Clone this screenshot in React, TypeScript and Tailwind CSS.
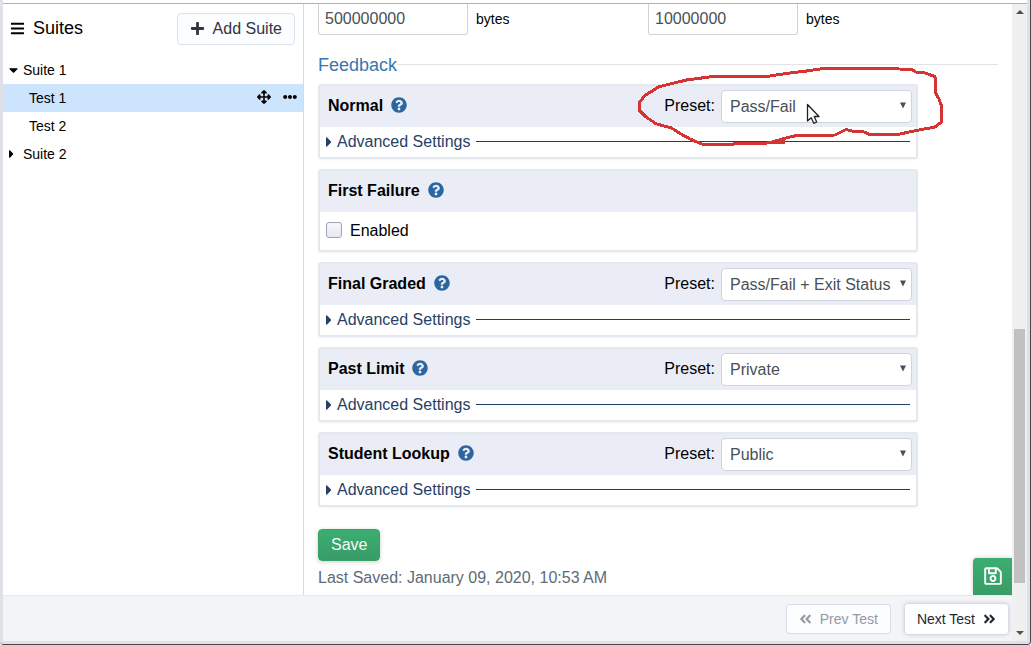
import React, { useState } from "react";
import {
  FaAngleDoubleLeft,
  FaAngleDoubleRight,
  FaArrowsAlt,
  FaBars,
  FaCaretDown,
  FaCaretRight,
  FaEllipsisH,
  FaPlus,
  FaQuestionCircle,
  FaRegSave,
} from "react-icons/fa";

const PRESETS = ["Pass/Fail", "Pass/Fail + Exit Status", "Private", "Public"];

function Sidebar() {
  return (
    <aside className="flex w-[301px] shrink-0 flex-col border-r border-[#cbdcf3] bg-white">
      <div className="flex items-center justify-between pt-[9px] pr-2 pl-[7px]">
        <h1 className="flex items-center gap-2 pb-0.5 text-lg leading-6">
          <FaBars className="size-[15px]" />
          <span>Suites</span>
        </h1>
        <button
          type="button"
          className="flex h-8 items-center gap-2 rounded border border-[#dae1ec] bg-[#fbfdff] px-3 text-base text-[#31353f]"
        >
          <FaPlus className="mb-0.5 size-[15px]" />
          Add Suite
        </button>
      </div>
      <ul className="mt-[11px] text-sm leading-7">
        <li>
          <button type="button" className="flex h-7 w-full items-center gap-1 pl-1.5">
            <span className="flex w-2.5">
              <FaCaretDown className="h-3.5 w-[9px]" />
            </span>
            Suite 1
          </button>
          <ul>
            <li className="flex h-7 items-center bg-[#cce4fc] pr-1.5 pl-[26px]">
              <a href="#test-1" className="flex-1">
                Test 1
              </a>
              <div className="flex gap-3 pb-0.5">
                <button type="button" aria-label="Move test">
                  <FaArrowsAlt className="size-3.5" />
                </button>
                <button type="button" aria-label="Test menu">
                  <FaEllipsisH className="size-3.5" />
                </button>
              </div>
            </li>
            <li className="flex h-7 items-center pl-[26px]">
              <a href="#test-2" className="flex-1">
                Test 2
              </a>
            </li>
          </ul>
        </li>
        <li>
          <button type="button" className="flex h-7 w-full items-center gap-1 pl-1.5">
            <span className="flex w-2.5">
              <FaCaretRight className="h-3.5 w-[5px]" />
            </span>
            Suite 2
          </button>
        </li>
      </ul>
    </aside>
  );
}

function BytesField({ id, label, value }: { id: string; label: string; value: string }) {
  return (
    <div className="flex w-[330px] items-center gap-2">
      <input
        id={id}
        aria-label={label}
        defaultValue={value}
        className="h-[31px] w-[150px] rounded-b-[3px] border border-t-0 border-[#ced4da] bg-white px-1.5 text-base text-[#495057] outline-none"
      />
      <label htmlFor={id} className="pb-0.5 text-sm">
        bytes
      </label>
    </div>
  );
}

function PresetSelect({ id, initial }: { id: string; initial: string }) {
  const [value, setValue] = useState(initial);
  return (
    <div className="flex items-center gap-1.5">
      <label htmlFor={id} className="pb-0.5">
        Preset:
      </label>
      <div className="grid w-[191px] items-center">
        <select
          id={id}
          value={value}
          onChange={(e) => setValue(e.target.value)}
          className="col-start-1 row-start-1 h-[33px] w-full appearance-none rounded-sm border border-[#ced4da] bg-white pl-2 text-base text-[#495057] outline-none"
        >
          {PRESETS.map((p) => (
            <option key={p}>{p}</option>
          ))}
        </select>
        <svg
          viewBox="0 0 6 7"
          className="pointer-events-none col-start-1 row-start-1 mr-1.5 mb-0.5 h-[7px] w-1.5 justify-self-end fill-[#495057]"
        >
          <path d="M0 0.5h6L3 6.5z" />
        </svg>
      </div>
    </div>
  );
}

function Panel({
  title,
  control,
  children,
  overlay,
}: {
  title: string;
  control?: React.ReactNode;
  children: React.ReactNode;
  overlay?: React.ReactNode;
}) {
  return (
    <section className="relative rounded-[3px] border-2 border-[#e4e9f0] bg-white shadow-[0_1px_2px_rgba(0,0,0,0.05)]">
      <header className="flex h-[41px] items-center justify-between bg-[#eaedf5] pr-1 pl-2">
        <div className="flex items-center gap-2 pb-0.5">
          <h3 className="font-bold">{title}</h3>
          <button type="button" aria-label={`About ${title}`} className="pb-0.5 text-[#2b669f]">
            <FaQuestionCircle className="size-4" />
          </button>
        </div>
        {control}
      </header>
      {children}
      {overlay}
    </section>
  );
}

function AdvancedSettings() {
  return (
    <button
      type="button"
      className="flex h-[30px] w-full items-center gap-1.5 pr-1.5 pl-1.5 text-left text-[#263f66]"
    >
      <FaCaretRight className="h-4 w-[5px]" viewBox="0 96 160 320" />
      <span>Advanced Settings</span>
      <span className="mb-0.5 h-px flex-1 bg-[#1f3f66]" />
    </button>
  );
}

function Annotation() {
  return (
    <svg
      viewBox="636 64 310 86"
      className="pointer-events-none absolute -top-[23px] -right-[30px] z-10 h-[86px] w-[310px]"
      aria-hidden="true"
    >
      <path
        d="M640 102.5L639.5 111.5L646 118L656 124.7L671.5 129L680 134.5L690 140L701.5 145H733.5L783.5 143.5L773 142.7L784 139.5L796.5 136.5L835 136L841 133L846 130.5L852 132L863 132.5L869.5 135.3H898.5L916.5 131.5L935 128L941.5 123V107L939 100L935 93V77.5L925 74L917 73.5L911.5 70.5L875 69H826.5L806.5 72L786 74.5L766.5 77.5H713L686.5 81L670 85L658.5 88L645 96.5Z"
        fill="none"
        stroke="#d63333"
        strokeWidth="3"
        strokeLinejoin="round"
        shapeRendering="crispEdges"
      />
      <path d="M773 143.5L785 142" stroke="#d63333" strokeWidth="4" shapeRendering="crispEdges" />
      <path
        d="M807.5 105.5V122L811.2 118.7L813.8 124.3L816.7 123L814.2 117.5H819Z"
        fill="#fff"
        stroke="#20242a"
        strokeWidth="1.3"
        strokeLinejoin="round"
      />
    </svg>
  );
}

function Scrollbar() {
  return (
    <div className="flex w-[15px] shrink-0 flex-col items-center bg-[#f0f0f0] py-1.5" aria-hidden="true">
      <svg viewBox="0 0 8 4" className="h-1 w-2 fill-[#505050]">
        <path d="M0 4L4 0L8 4z" />
      </svg>
      <div className="flex-[314]" />
      <div className="w-[11px] flex-[254] bg-[#c1c1c1]" />
      <div className="flex-[48]" />
      <svg viewBox="0 0 8 4" className="h-1 w-2 fill-[#505050]">
        <path d="M0 0h8L4 4z" />
      </svg>
    </div>
  );
}

export default function App() {
  return (
    <div className="flex min-h-screen flex-col rounded-b border-r border-b border-[#45474b] bg-white font-['Liberation_Sans',Arial,sans-serif] text-base text-black">
      <div className="flex flex-1 flex-col rounded-b border-x-3 border-b-3 border-[#dfe1e7]">
        <div className="h-1 border-b border-[#b0b0b0]" />
        <div className="flex flex-1">
          <div className="flex min-w-0 flex-1 flex-col">
            <div className="flex flex-1">
              <Sidebar />
              <main className="relative min-w-0 flex-1 overflow-hidden px-3.5">
                <div className="flex">
                  <BytesField id="stdout-limit" label="Output limit" value="500000000" />
                  <BytesField id="stderr-limit" label="Error output limit" value="10000000" />
                </div>
                <div className="mt-[17px] flex h-6 items-center text-lg text-[#3a76b0]">
                  <h2 className="pt-0.5">Feedback</h2>
                  <span className="h-px flex-1 bg-[#e2e4e6]" />
                </div>
                <div className="mt-2 flex max-w-[600px] flex-col gap-2.5">
                  <Panel
                    title="Normal"
                    control={<PresetSelect id="normal-preset" initial="Pass/Fail" />}
                    overlay={<Annotation />}
                  >
                    <AdvancedSettings />
                  </Panel>
                  <Panel title="First Failure">
                    <label className="flex h-[38px] items-center gap-2 pl-1.5">
                      <input
                        type="checkbox"
                        className="mb-0.5 size-4 appearance-none rounded-[3px] border border-[#9ba3b5] bg-linear-to-b from-[#f8f8fb] to-[#e6e8f0] checked:bg-[#2b669f]"
                      />
                      Enabled
                    </label>
                  </Panel>
                  <Panel
                    title="Final Graded"
                    control={<PresetSelect id="final-preset" initial="Pass/Fail + Exit Status" />}
                  >
                    <AdvancedSettings />
                  </Panel>
                  <Panel title="Past Limit" control={<PresetSelect id="past-preset" initial="Private" />}>
                    <AdvancedSettings />
                  </Panel>
                  <Panel title="Student Lookup" control={<PresetSelect id="lookup-preset" initial="Public" />}>
                    <AdvancedSettings />
                  </Panel>
                </div>
                <button
                  type="button"
                  className="mt-[22px] flex h-8 items-center rounded border border-[#38a169] bg-linear-to-b from-[#3cae72] to-[#389c66] px-3 text-[#f4fbf7] shadow-[0_1px_4px_rgba(0,0,0,0.2)]"
                >
                  Save
                </button>
                <p className="mt-[5px] leading-6 text-[#606b77]">Last Saved: January 09, 2020, 10:53 AM</p>
                <button
                  type="button"
                  aria-label="Save changes"
                  className="absolute right-0 bottom-0 flex h-[37px] w-[39px] items-center justify-center rounded-tl-sm bg-linear-to-b from-[#3cae72] to-[#389c66] pb-0.5 text-white shadow-[0_0_4px_rgba(0,0,0,0.2)]"
                >
                  <FaRegSave className="size-5" />
                </button>
              </main>
            </div>
            <footer className="flex h-[46px] items-center justify-end gap-3.5 border-t border-[#e6e8ea] bg-[#f3f4f6] pr-1 text-sm">
              <button
                type="button"
                disabled
                className="flex h-[30px] items-center gap-2 rounded-[3px] border border-[#d8dce8] bg-[#fbfdff] px-3 text-[#9599a3]"
              >
                <FaAngleDoubleLeft className="h-3.5 w-[13px]" />
                Prev Test
              </button>
              <button
                type="button"
                className="flex h-[30px] items-center gap-2 rounded-[3px] bg-[#fdfeff] px-3 text-[#26282f] shadow-[0_0_4px_rgba(80,90,130,0.4)]"
              >
                Next Test
                <FaAngleDoubleRight className="h-3.5 w-[13px]" />
              </button>
            </footer>
          </div>
          <Scrollbar />
        </div>
      </div>
    </div>
  );
}
